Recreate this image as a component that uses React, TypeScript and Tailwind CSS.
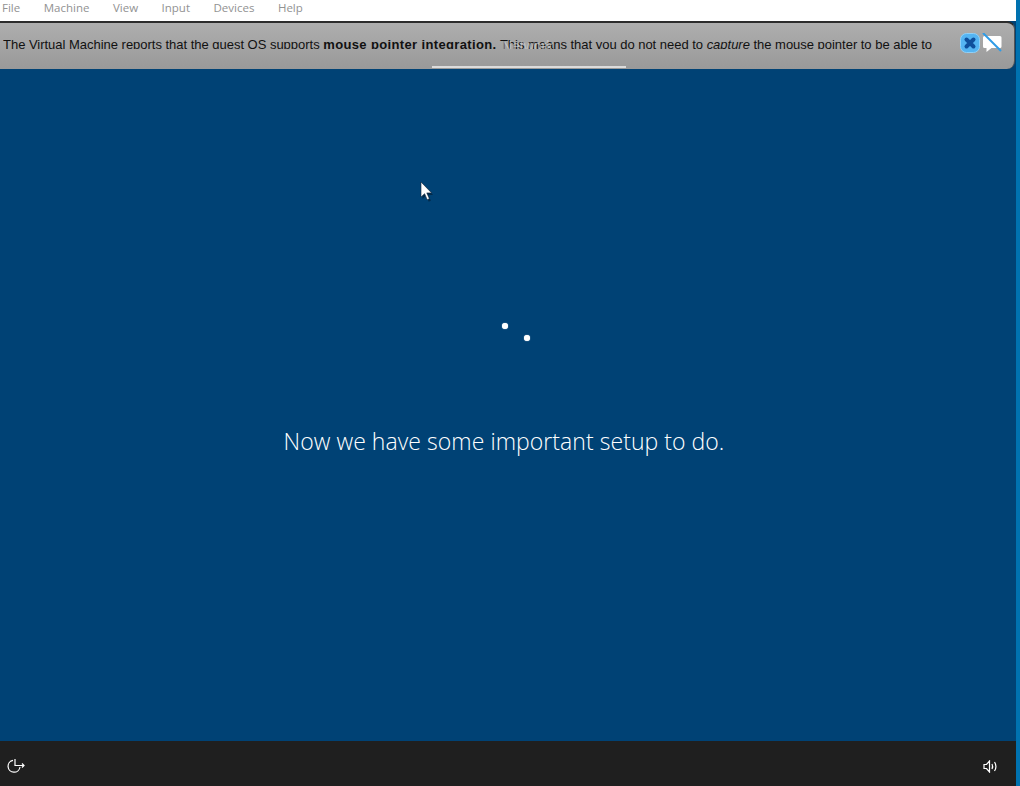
const MENU = ['File', 'Machine', 'View', 'Input', 'Devices', 'Help']

function CloseIcon() {
  return (
    <svg width="20" height="20" viewBox="0 0 20 20" aria-hidden>
      <rect x="0.5" y="0.5" width="19" height="19" rx="6" fill="#55b4f2" stroke="#8fd0f8" />
      <path d="M6.500 6.500l7 7M13.500 6.500l-7 7" stroke="#0f4f9c" strokeWidth="4" strokeLinecap="round" />
    </svg>
  )
}

function NoBubbleIcon() {
  return (
    <svg width="21" height="20" viewBox="0 0 21 20" aria-hidden>
      <path d="M3.500 3h15.500a1.500 1.500 0 0 1 1.500 1.500v9a1.500 1.500 0 0 1-1.500 1.500h-8.500l-5 4v-4h-2a1.500 1.500 0 0 1-1.500-1.500v-9a1.500 1.500 0 0 1 1.500-1.500z" fill="#fff" />
      <path d="M2 0l18 18" stroke="#2f9be6" strokeWidth="2" />
    </svg>
  )
}

function PointerIcon() {
  return (
    <svg width="14" height="22" viewBox="0 0 14 22" aria-hidden>
      <path d="M1.500 2v15l3.600-3.300 2.600 6 2.200-1-2.600-5.800h4.800z" fill="#000" opacity="0.35" transform="translate(1 1)" />
      <path d="M1 1v15l3.600-3.300 2.600 6 2.200-1-2.600-5.800h4.800z" fill="#fff" stroke="#10233a" strokeWidth="0.6" />
    </svg>
  )
}

function EaseIcon() {
  return (
    <svg width="18" height="18" viewBox="0 0 18 18" fill="none" stroke="#fff" strokeWidth="1.2" aria-hidden>
      <path d="M6 3.300a6 6 0 1 0 7 6.700" />
      <path d="M8 2v6.500h9" />
      <path d="M15 6.500l2 2-2 2" />
    </svg>
  )
}

function VolumeIcon() {
  return (
    <svg width="15" height="13" viewBox="0 0 15 13" fill="none" stroke="#fff" strokeWidth="1.2" aria-hidden>
      <path d="M1 4.500h2.500L6.500 1v11L3.500 8.500H1z" />
      <path d="M9 4c.8 1.500.8 3.500 0 5" />
      <path d="M11.500 2c1.800 2.800 1.800 6.200 0 9" />
    </svg>
  )
}

export default function App() {
  return (
    <div className="flex h-[786px] w-[1020px] overflow-hidden bg-[#0072b0]">
      <div className="flex w-[1016px] shrink-0 flex-col bg-[#004275]">
        {/* VirtualBox menu */}
        <div className="flex h-[21px] shrink-0 items-center gap-[23.5px] bg-white pb-[6px] pl-[2px] font-['Open_Sans',sans-serif] text-[11.5px] text-[#929292]">
          {MENU.map((item) => (
            <span key={item}>{item}</span>
          ))}
        </div>

        {/* guest screen */}
        <div className="relative flex min-h-0 flex-1 flex-col">
          <div className="absolute left-0 top-0 flex h-[48px] w-[1015px] items-start justify-between rounded-r-[8px] border-t-2 border-r border-[#2c2c2c] border-r-[#555] bg-gradient-to-b from-[#aeaeae] to-[#999999] pl-[3px] pr-[12px]">
            <div className="relative mt-[14px] h-[12px] w-[935px] overflow-hidden whitespace-nowrap font-['Liberation_Sans',sans-serif] text-[13px] leading-[15px] tracking-[-0.02px] text-[#111]">
              The Virtual Machine reports that the guest OS supports <b className="tracking-[0.36px]">mouse pointer integration.</b> This means that you do not need to <i>capture</i> the mouse pointer to be able to
              <span className="absolute left-[499px] top-[2px] text-[14px] text-[#d8d8d8] opacity-60">Network</span>
            </div>
            <div className="mt-[10px] flex items-start gap-[1px]">
              <CloseIcon />
              <NoBubbleIcon />
            </div>
            <div className="absolute bottom-[1px] left-[432px] h-[2px] w-[194px] bg-[#dcdcdc]" />
          </div>

          <div className="absolute left-[420px] top-[160px]">
            <PointerIcon />
          </div>
          <div className="absolute left-[502px] top-[302px] size-[6px] rounded-full bg-white shadow-[0_0_1px_#fff]" />
          <div className="absolute left-[524px] top-[314px] size-[6px] rounded-full bg-white shadow-[0_0_1px_#fff]" />

          <div className="flex flex-1 justify-center pr-[8px] pt-[403px]">
            <p className="font-['Open_Sans',sans-serif] text-[23px] font-light leading-[34px] tracking-[0.05px] text-white">
              Now we have some important setup to do.
            </p>
          </div>

          {/* bottom bar */}
          <div className="flex h-[45px] shrink-0 items-center justify-between bg-[#1f1f1f] pl-[7px] pr-[18px] pt-[5px]">
            <EaseIcon />
            <VolumeIcon />
          </div>
        </div>
      </div>
    </div>
  )
}
